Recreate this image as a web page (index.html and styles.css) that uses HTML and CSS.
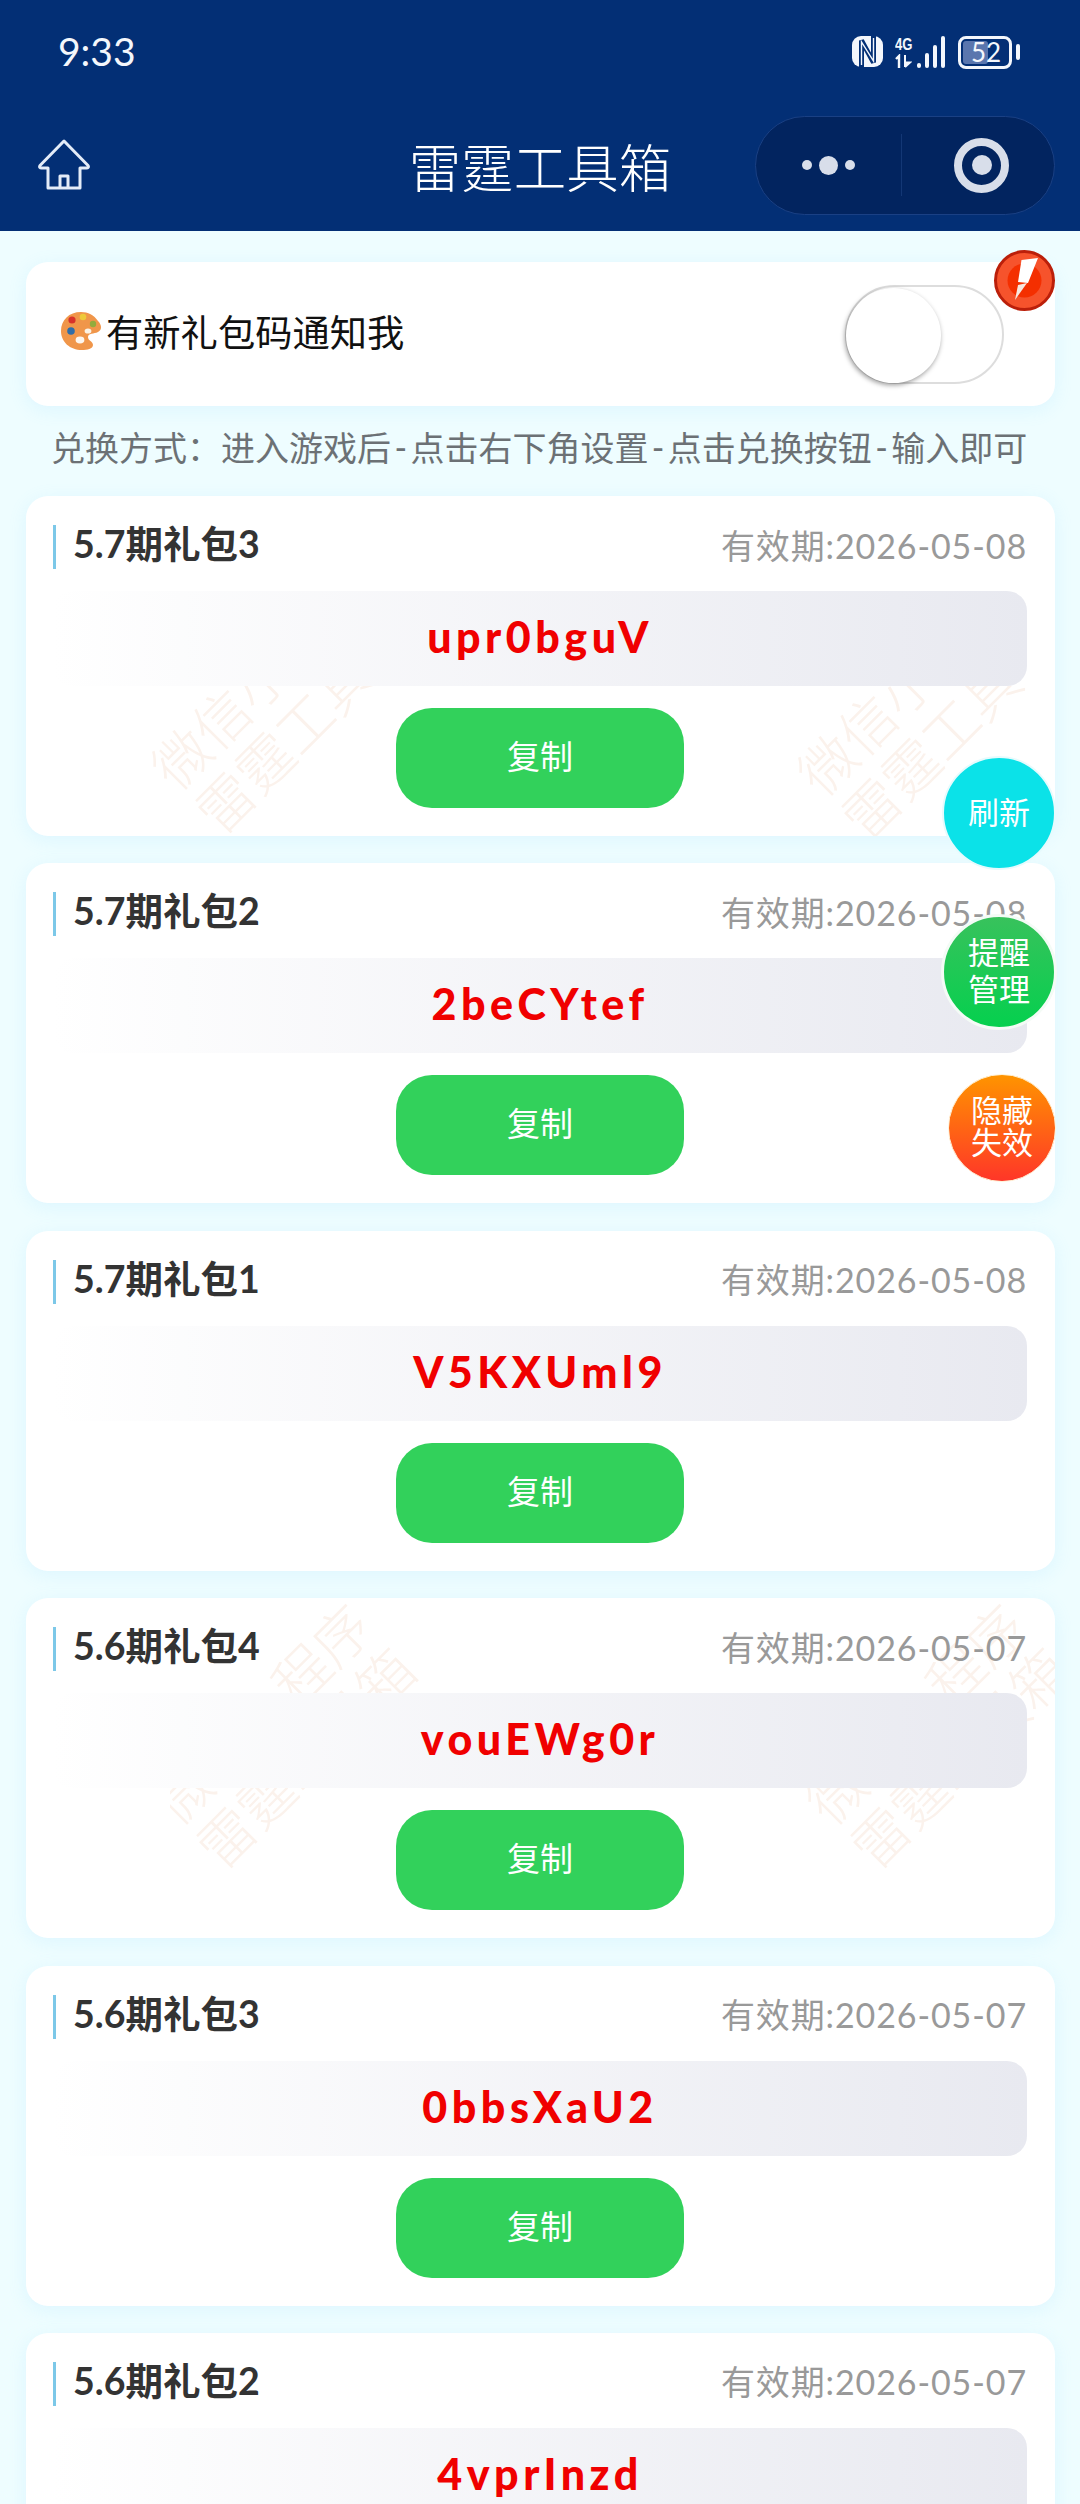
FILE: index.html
```html
<!DOCTYPE html>
<html lang="zh-CN">
<head>
<meta charset="utf-8">
<title>雷霆工具箱</title>
<link rel="stylesheet" href="styles.css">
</head>
<body>
<div class="page">
  <header class="top">
    <div class="status">
      <span class="time">9:33</span>
      <div class="status-icons">
        <svg class="nfc" width="31" height="31" viewBox="0 0 31 31"><rect x="0" y="0" width="31" height="31" rx="9" fill="#f4f7fc"/><path d="M9.5 31V4.5L21.5 26.5V0" fill="none" stroke="#032f75" stroke-width="5"/><path d="M9.5 29V6L21.5 25V2" fill="none" stroke="#f4f7fc" stroke-width="1.4"/></svg>
        <div class="net">
          <span class="net-label">4G</span>
          <svg width="17" height="14" viewBox="0 0 17 14"><path d="M1 5L4 2V14M4 2V14" fill="none" stroke="#f4f7fc" stroke-width="2.4"/><path d="M10 1V13M10 13L15 8.5H10" fill="#f4f7fc" stroke="#f4f7fc" stroke-width="2"/></svg>
        </div>
        <svg class="bars" width="29" height="32" viewBox="0 0 29 32"><rect x="0" y="27" width="4" height="5" rx="2" fill="#f4f7fc"/><rect x="8" y="17" width="4" height="15" rx="2" fill="#f4f7fc"/><rect x="16" y="9" width="4" height="23" rx="2" fill="#f4f7fc"/><rect x="24" y="0" width="4" height="32" rx="2" fill="#f4f7fc"/></svg>
        <div class="battery"><span class="battery-fill"></span><span class="battery-text">52</span></div>
        <span class="battery-nub"></span>
      </div>
    </div>
    <nav class="nav">
      <div class="nav-left">
        <svg width="52" height="52" viewBox="0 0 52 52"><path d="M26 2L2 26.5C1 28 2 29 3.5 29H10V49H42V29H48.5C50 29 51 28 50 26.5Z M22 49V37H30V49" fill="none" stroke="#e4ecf8" stroke-width="3" stroke-linejoin="round"/></svg>
      </div>
      <h1 class="nav-title">雷霆工具箱</h1>
      <div class="nav-right">
        <div class="capsule">
          <div class="capsule-half">
            <span class="dot"></span><span class="dot dot-big"></span><span class="dot"></span>
          </div>
          <span class="capsule-line"></span>
          <div class="capsule-half capsule-half-ring"><span class="ring"></span></div>
        </div>
      </div>
    </nav>
  </header>

  <main class="main">
    <section class="notify">
      <div class="notify-label">
        <svg class="palette" width="41" height="40" viewBox="0 0 41 40"><path d="M20 1C8 1 0 9 0 20C0 31 9 39 21 39C26 39 32 38 32 34C32 30 27 30 27 26C27 22 33 23 37 21C41 19 41 14 37 10C33 4 27 1 20 1Z" fill="#f0964a"/><circle cx="11" cy="9" r="3.6" fill="#d8322a"/><circle cx="22" cy="6" r="3.3" fill="#eec93a"/><circle cx="32" cy="13" r="3.2" fill="#93ab3c"/><circle cx="10" cy="20" r="3.8" fill="#2f6da8"/><ellipse cx="27" cy="20" rx="3.4" ry="2.6" fill="#fbf3e6"/><ellipse cx="19" cy="29" rx="4.4" ry="3.4" fill="#fdf6ee"/></svg>
        <span>有新礼包码通知我</span>
      </div>
      <div class="toggle"><span class="knob"></span></div>
      <svg class="badge" width="61" height="61" viewBox="0 0 61 61"><circle cx="30.5" cy="30.5" r="29" fill="#f6532c" stroke="#bb1f0a" stroke-width="3"/><circle cx="30.5" cy="30.5" r="17" fill="#f42f00"/><path d="M27.5 10L44 8L34 33L24 32Z" fill="#fff"/><path d="M24 35L33 33L21 50Z" fill="#f6e8e0"/></svg>
    </section>

    <p class="tip">兑换方式：进入游戏后<span class="dash">-</span>点击右下角设置<span class="dash">-</span>点击兑换按钮<span class="dash">-</span>输入即可</p>

    <section class="list">
      <article class="card">
        <div class="wm-zone zone-a"><div class="wm wm-a1"><span>微信小程序</span><span>雷霆工具箱</span></div><div class="wm wm-a2"><span>微信小程序</span><span>雷霆工具箱</span></div></div>
        <div class="card-head"><h2 class="card-title">5.7期礼包3</h2><span class="card-date">有效期:2026-05-08</span></div>
        <div class="code">upr0bguV</div>
        <button class="copy">复制</button>
      </article>
      <article class="card">
        <div class="card-head"><h2 class="card-title">5.7期礼包2</h2><span class="card-date">有效期:2026-05-08</span></div>
        <div class="code">2beCYtef</div>
        <button class="copy">复制</button>
      </article>
      <article class="card">
        <div class="card-head"><h2 class="card-title">5.7期礼包1</h2><span class="card-date">有效期:2026-05-08</span></div>
        <div class="code">V5KXUml9</div>
        <button class="copy">复制</button>
      </article>
      <article class="card">
        <div class="wm-zone zone-b1"><div class="wm wm-b1"><span>微信小程序</span><span>雷霆工具箱</span></div></div>
        <div class="wm-zone zone-b2"><div class="wm wm-b2"><span>微信小程序</span><span>雷霆工具箱</span></div></div>
        <div class="card-head"><h2 class="card-title">5.6期礼包4</h2><span class="card-date">有效期:2026-05-07</span></div>
        <div class="code">vouEWg0r</div>
        <button class="copy">复制</button>
      </article>
      <article class="card">
        <div class="card-head"><h2 class="card-title">5.6期礼包3</h2><span class="card-date">有效期:2026-05-07</span></div>
        <div class="code">0bbsXaU2</div>
        <button class="copy">复制</button>
      </article>
      <article class="card">
        <div class="card-head"><h2 class="card-title">5.6期礼包2</h2><span class="card-date">有效期:2026-05-07</span></div>
        <div class="code">4vprInzd</div>
        <button class="copy">复制</button>
      </article>
    </section>
  </main>

  <div class="fab fab-refresh">刷新</div>
  <div class="fab fab-remind">提醒<br>管理</div>
  <div class="fab fab-hide">隐藏<br>失效</div>
</div>
</body>
</html>
```
FILE: styles.css
```css
* { box-sizing: border-box; }
html, body { margin: 0; padding: 0; }
body {
  font-family: Lato, "Noto Sans CJK SC", sans-serif;
  background: #eefdff;
}
.page {
  position: relative;
  width: 1080px;
  height: 2504px;
  overflow: hidden;
  background: #eefdff;
}

/* header */
.top { height: 231px; background: #032f75; color: #fff; }
.status {
  display: flex;
  align-items: center;
  height: 100px;
  padding: 0 60px 0 58px;
}
.time { font-size: 39px; font-weight: 400; line-height: 1; margin-top: 2px; color: #f4f7fc; }
.status-icons { display: flex; align-items: flex-end; margin-left: auto; height: 34px; margin-top: 4px; }
.nfc { margin-bottom: 2px; }
.net { display: flex; flex-direction: column; width: 17px; margin-left: 12px; margin-bottom: 1px; }
.net-label {
  font-family: "Liberation Sans", sans-serif;
  font-weight: 700;
  font-size: 16px;
  line-height: 15px;
  height: 17px;
  color: #f4f7fc;
  transform: scaleX(.82);
  transform-origin: left;
}
.bars { margin-left: 5px; margin-bottom: 1px; }
.battery {
  position: relative;
  width: 54px;
  height: 33px;
  margin-left: 12px;
  border: 3px solid #f4f7fc;
  border-radius: 8px;
}
.battery-fill {
  position: absolute;
  left: 2px;
  top: 2px;
  width: 25px;
  height: 23px;
  background: #5a76ae;
  border-radius: 3px;
}
.battery-text {
  position: absolute;
  left: 10px;
  top: 0;
  font-size: 26px;
  line-height: 27px;
  color: #f4f7fc;
}
.battery-nub {
  width: 4px;
  height: 16px;
  margin: 0 0 9px 4px;
  background: #f4f7fc;
  border-radius: 2px;
}
.nav {
  display: grid;
  grid-template-columns: 1fr auto 1fr;
  align-items: center;
  height: 131px;
  padding-bottom: 1px;
}
.nav-left { padding-left: 38px; display: flex; }
.nav-title {
  margin: 0;
  font-family: "Noto Sans CJK SC", sans-serif;
  font-size: 52.5px;
  font-weight: 300;
  line-height: 1;
  color: #fff;
}
.nav-right { display: flex; justify-content: flex-end; padding-right: 25px; }
.capsule {
  display: flex;
  align-items: center;
  width: 300px;
  height: 99px;
  background: #02245f;
  border: 1px solid #1a4084;
  border-radius: 50px;
}
.capsule-half { flex: 1; display: flex; align-items: center; justify-content: center; gap: 7px; }
.capsule-half-ring { padding-left: 8px; }
.capsule-line { width: 1px; height: 62px; background: #133775; }
.dot { width: 10px; height: 10px; border-radius: 50%; background: #d8deea; }
.dot-big { width: 19px; height: 19px; }
.ring {
  display: flex;
  align-items: center;
  justify-content: center;
  width: 55px;
  height: 55px;
  border: 8px solid #d8deea;
  border-radius: 50%;
}
.ring::after { content: ""; width: 20px; height: 20px; border-radius: 50%; background: #d8deea; }

/* main */
.main { padding: 31px 25px 0 26px; }
.notify {
  position: relative;
  display: flex;
  align-items: center;
  justify-content: space-between;
  height: 144px;
  padding: 0 51px 0 35px;
  background: #fff;
  border-radius: 22px;
  box-shadow: 0 4px 18px rgba(120, 205, 255, .14);
}
.notify-label {
  display: flex;
  align-items: center;
  padding-bottom: 6px;
  font-family: "Noto Sans CJK SC", sans-serif;
  font-size: 37.3px;
  color: #111;
}
.palette { margin-right: 4px; }
.toggle {
  position: relative;
  width: 159px;
  height: 99px;
  background: #fff;
  border: 2px solid #dddddd;
  border-radius: 50px;
}
.knob {
  position: absolute;
  left: -1px;
  top: 1px;
  width: 95px;
  height: 95px;
  background: #fff;
  border-radius: 50%;
  box-shadow: -1px 2px 5px rgba(0, 0, 0, .4);
}
.badge { position: absolute; right: 0; top: -12px; }
.tip {
  display: flex;
  align-items: center;
  height: 90px;
  margin: 0;
  padding: 0 0 10px 25px;
  font-family: "Noto Sans CJK SC", sans-serif;
  font-size: 34px;
  color: #6c7175;
  white-space: nowrap;
}
.dash { margin: 0 3.4px; font-family: Lato, sans-serif; }

.list { display: flex; flex-direction: column; gap: 27.4px; }
.card {
  position: relative;
  flex: none;
  display: flex;
  flex-direction: column;
  align-items: center;
  height: 340px;
  padding: 29px 28px 28px 27px;
  overflow: hidden;
  background: #fff;
  border-radius: 22px;
  box-shadow: 0 4px 18px rgba(120, 205, 255, .14);
}
.wm-zone { position: absolute; overflow: hidden; }
.zone-a { left: 0; right: 0; top: 190px; bottom: 0; }
.zone-b1 { left: 144px; top: 0; bottom: 0; width: 300px; }
.zone-b2 { left: 771px; top: 0; bottom: 0; right: 0; }
.wm {
  position: absolute;
  display: flex;
  flex-direction: column;
  align-items: center;
  width: 300px;
  font-family: "Noto Sans CJK SC", sans-serif;
  font-size: 56px;
  font-weight: 300;
  line-height: 62px;
  color: #fbf2ec;
  white-space: nowrap;
  transform: rotate(-45deg);
}
.wm-a1 { left: 105px; top: -49px; }
.wm-a2 { left: 751px; top: -43px; }
.wm-b1 { left: -38px; top: 74px; }
.wm-b2 { left: -11px; top: 74px; }
.card-head {
  position: relative;
  display: flex;
  align-items: center;
  justify-content: space-between;
  width: 100%;
  height: 44px;
}
.card-title {
  margin: 0;
  padding: 0 0 6px 17px;
  border-left: 3px solid #7cc8e8;
  font-size: 37.5px;
  font-weight: 700;
  line-height: 38px;
  color: #333;
}
.card-date { margin-bottom: 6px; font-size: 34px; letter-spacing: .9px; color: #999; }
.code {
  position: relative;
  width: 100%;
  height: 95px;
  margin-top: 22px;
  background: linear-gradient(90deg, #fff, #e8e9f0);
  border-radius: 20px;
  font-size: 43px;
  font-weight: 900;
  line-height: 92px;
  letter-spacing: 4.5px;
  text-align: center;
  color: #f00000;
}
.copy {
  position: relative;
  width: 288px;
  height: 100px;
  margin-top: 22px;
  padding: 0 0 6px;
  background: #32d15b;
  border: 0;
  border-radius: 36px;
  font-family: "Noto Sans CJK SC", sans-serif;
  font-size: 33px;
  font-weight: 400;
  color: #fff;
}

/* floating buttons */
.fab {
  position: absolute;
  display: flex;
  align-items: center;
  justify-content: center;
  padding-bottom: 6px;
  text-align: center;
  border-radius: 50%;
  font-family: "Noto Sans CJK SC", sans-serif;
  font-size: 31px;
  color: #fff;
}
.fab-refresh { left: 942px; top: 756px; width: 114px; height: 114px; background: #0be2e8; border: 2px solid #e6fbfd; }
.fab-remind {
  left: 941px; top: 914px; width: 116px; height: 116px;
  background: linear-gradient(180deg, #38c25c, #05d04e);
  border: 3px solid #f4fbf6;
  line-height: 37px;
}
.fab-hide {
  left: 948px; top: 1074px; width: 108px; height: 108px;
  background: linear-gradient(180deg, #ff9400, #ff3628);
  border: 1px solid #fff3d8;
  line-height: 32px;
}
```
